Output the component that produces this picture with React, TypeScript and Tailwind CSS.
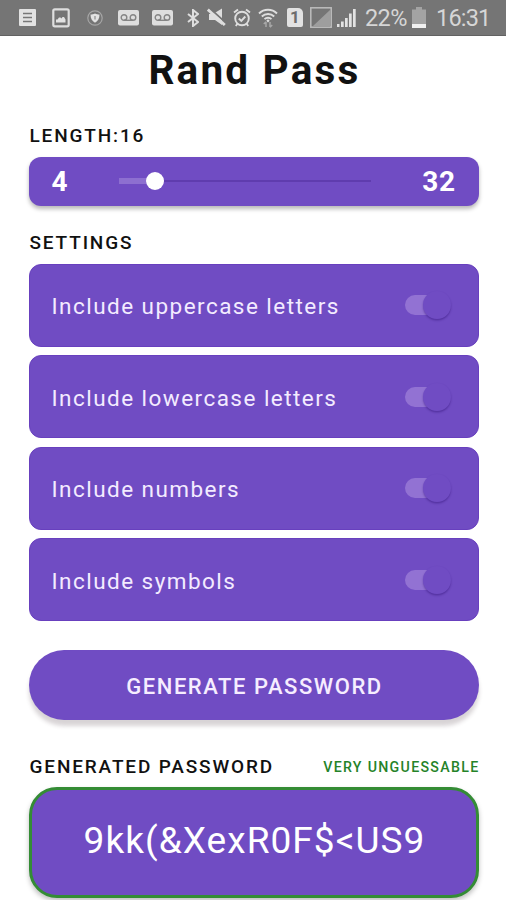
import React, { useState } from "react";

type Setting = {
	id: string;
	label: string;
};

const SETTINGS: Setting[] = [
	{ id: "uppercase", label: "Include uppercase letters" },
	{ id: "lowercase", label: "Include lowercase letters" },
	{ id: "numbers", label: "Include numbers" },
	{ id: "symbols", label: "Include symbols" },
];

function Voicemail({ className }: { className: string }) {
	return (
		<svg className={className} width="21" height="16" viewBox="0 0 21 16">
			<rect width="21" height="15.5" rx="2" fill="#dedede" />
			<g fill="none" stroke="#858585" strokeWidth="1.4">
				<circle cx="6" cy="7.5" r="2.8" />
				<circle cx="15" cy="7.5" r="2.8" />
				<path d="M6 10.3h9" />
			</g>
		</svg>
	);
}

function StatusBar() {
	return (
		<div className="flex h-9 items-center border-b border-[#626262] bg-[#757575] pl-[19px] text-[23.5px] leading-none text-[#d6d6d6]">
			<svg width="17" height="17" viewBox="0 0 17 17" className="shrink-0">
				<rect width="17" height="17" rx="1" fill="#e2e2e2" />
				<path d="M4 4.5h9M4 8.5h9M4 12.5h9" stroke="#777" strokeWidth="1.5" />
			</svg>
			<svg width="18" height="20" viewBox="0 0 18 20" className="ml-4 shrink-0">
				<rect x="1.3" y="1.3" width="15.4" height="17" rx="1.5" fill="none" stroke="#dedede" strokeWidth="2.2" />
				<path d="M4 14.5v-3h1.5L7 9.5h1.500l1 1 1-1.500h1.500l1.500 2.500v3z" fill="#e2e2e2" />
			</svg>
			<svg width="16" height="16" viewBox="0 0 16 16" className="ml-[17px] shrink-0">
				<circle cx="8" cy="8" r="7.2" fill="none" stroke="#a6a6a6" strokeWidth="1.2" />
				<path d="M8 3.5c1.500.8 3 1 4.500 1 0 4-1.500 6.500-4.500 8.200C5 11 3.500 8.500 3.500 4.500 5 4.500 6.500 4.300 8 3.500z" fill="#e2e2e2" />
				<path d="M8 6v3.500" stroke="#999" strokeWidth="1.4" />
			</svg>
			<Voicemail className="ml-[15px] shrink-0" />
			<Voicemail className="ml-[13px] shrink-0" />
			<svg width="12" height="18" viewBox="0 0 12 18" className="ml-[14px] shrink-0">
				<path d="M1 5l10 8-5 4V1l5 4L1 13" fill="none" stroke="#dedede" strokeWidth="2" />
			</svg>
			<svg width="19" height="19" viewBox="0 0 19 19" className="ml-2 shrink-0">
				<path d="M2 6h4l9-5.500V17L8 12H2z" fill="#dedede" />
				<path d="M2.500 0L19 15" stroke="#757575" strokeWidth="1.8" />
				<path d="M.8 1.500l17 15.500" stroke="#dedede" strokeWidth="2.8" />
			</svg>
			<svg width="18" height="20" viewBox="0 0 18 20" className="ml-[7px] shrink-0" fill="none" stroke="#dedede" strokeWidth="1.9">
				<circle cx="9" cy="10.500" r="6.800" />
				<path d="M5.800 10.500l2.500 2.300 4-4.300M1 4.500l4-3M17 4.500l-4-3M4.500 15.500L2.800 18M13.500 15.500l1.700 2.500" />
			</svg>
			<svg width="20" height="20" viewBox="0 0 20 20" className="ml-[7px] shrink-0" fill="none" stroke="#dedede" strokeWidth="1.9">
				<path d="M1 5.500c5-5 13-5 18 0M3.800 8.500c3.500-3.400 9-3.400 12.400 0M6.500 11.200c2-2 5-2 7 0" />
				<path d="M8.300 12.800L10 11.300l1.700 1.500L10 14.500z" fill="#dedede" stroke="none" />
				<path d="M8 19v-5M5.800 16L8 13.800M12 14v5M14.200 17L12 19.200" stroke="#a8a8a8" strokeWidth="1.500" />
			</svg>
			<div className="ml-[9px] flex h-[19px] w-4 shrink-0 items-center justify-center rounded-[2px] rounded-tr-[5px] bg-[#e2e2e2] text-[17px] font-bold text-[#6d6d6d]">
				1
			</div>
			<svg width="22" height="21" viewBox="0 0 22 21" className="ml-[7px] shrink-0">
				<rect x=".8" y=".8" width="20.400" height="19.400" fill="none" stroke="#bdbdbd" strokeWidth="1.500" />
				<path d="M3 19L20 3v16z" fill="#9e9e9e" />
			</svg>
			<svg width="19" height="19" viewBox="0 0 19 19" className="ml-[5px] shrink-0">
				<path d="M0 16h2.500v3H0zM4 13.500h2.700V19H4zM8 10h2.700v9H8zM12 5.500h2.700V19H12zM16 1h2.700v18H16z" fill="#e2e2e2" />
			</svg>
			<span className="ml-[9px] w-[42px] pt-0.5 whitespace-nowrap tracking-[-0.6px]">22%</span>
			<svg width="14" height="21" viewBox="0 0 14 21" className="ml-[5px] mb-px shrink-0">
				<path d="M0 2.500h4V0h6v2.500h4V21H0z" fill="#a3a3a3" />
				<path d="M0 17h14v4H0z" fill="#f0f0f0" />
			</svg>
			<span className="ml-[10px] pt-0.5 whitespace-nowrap tracking-[-0.8px]">16:31</span>
		</div>
	);
}

function LengthSlider({ value, min, max }: { value: number; min: number; max: number }) {
	return (
		<div className="mt-[9.8px] flex h-[49px] items-center justify-between rounded-xl bg-[#704cc3] px-[23px] text-[28px] font-bold text-white shadow-[0_3px_4px_rgba(0,0,0,0.28)]">
			<span className="w-[67px] pt-0.5">{min}</span>
			<div className="flex w-[252px] items-center" role="slider" aria-valuenow={value} aria-valuemin={min} aria-valuemax={max}>
				<div className="h-1.5 w-[27px] bg-[#8d6fd0]" />
				<div className="h-[18px] w-[18px] rounded-full bg-white" />
				<div className="h-0.5 flex-1 bg-[#5f3cae]" />
			</div>
			<span className="w-[85px] pt-0.5 text-right tracking-[0.5px]">{max}</span>
		</div>
	);
}

function SettingRow({ label, on, onToggle }: { label: string; on: boolean; onToggle: () => void }) {
	return (
		<div className="flex h-[83px] items-center justify-between rounded-xl border border-[#6840be] bg-[#704cc3] pr-[27px] pl-[22px]">
			<span className="pt-1 text-[22.5px] tracking-[1.46px] text-[#f3ebff]">{label}</span>
			<button role="switch" aria-checked={on} onClick={onToggle} className="flex items-center">
				<span className="h-5 w-[34px] rounded-full bg-[#9272d3]" />
				<span className="-ml-4 h-7 w-7 rounded-full bg-[#704cc3] shadow-[0_1.5px_2px_rgba(50,20,120,0.45)]" />
			</button>
		</div>
	);
}

export default function App() {
	const [enabled, setEnabled] = useState<Record<string, boolean>>({
		uppercase: true,
		lowercase: true,
		numbers: true,
		symbols: true,
	});

	return (
		<div className="h-[900px] w-[506px] overflow-hidden bg-white font-[Roboto,sans-serif] text-[#111]">
			<StatusBar />
			<main className="pr-[27.5px] pl-[28.5px]">
				<h1 className="mt-[10px] pl-0.5 text-center text-[40.5px] leading-[48px] font-bold tracking-[2.2px]">Rand Pass</h1>
				<div className="mt-[31px] pl-px text-[19px] leading-[22px] font-medium tracking-[1.85px]">LENGTH:16</div>
				<LengthSlider value={16} min={4} max={32} />

				<h2 className="mt-[26px] pl-px text-[19px] leading-[22px] font-medium tracking-[1.85px]">SETTINGS</h2>
				<div className="mt-[10px] flex flex-col gap-[8.5px]">
					{SETTINGS.map(({ id, label }) => (
						<SettingRow
							key={id}
							label={label}
							on={enabled[id]}
							onToggle={() => setEnabled({ ...enabled, [id]: !enabled[id] })}
						/>
					))}
				</div>

				<button className="mt-[29px] flex h-[69.5px] w-full items-center justify-center rounded-full bg-[#704cc3] pt-[3px] pl-0.5 text-[22px] font-medium tracking-[1.55px] text-[#f6edff] shadow-[0_6px_4px_rgba(60,40,50,0.2)]">
					GENERATE PASSWORD
				</button>

				<div className="mt-[36px] flex items-center justify-between">
					<h2 className="pl-px text-[19px] leading-[22px] font-medium tracking-[1.85px]">GENERATED PASSWORD</h2>
					<span className="-mr-px text-[14.2px] leading-[22px] font-medium tracking-[1.3px] text-[#258329]">
						VERY UNGUESSABLE
					</span>
				</div>
				<div className="mt-[9.5px] flex h-[111px] items-center justify-center rounded-[28px] border-[3.5px] border-[#348c35] bg-[#704cc3] pb-1 pl-0.5 text-[37px] tracking-[1.05px] text-white shadow-[0_3px_5px_rgba(0,0,0,0.25)]">
					9kk(&amp;XexR0F$&lt;US9
				</div>
			</main>
		</div>
	);
}
